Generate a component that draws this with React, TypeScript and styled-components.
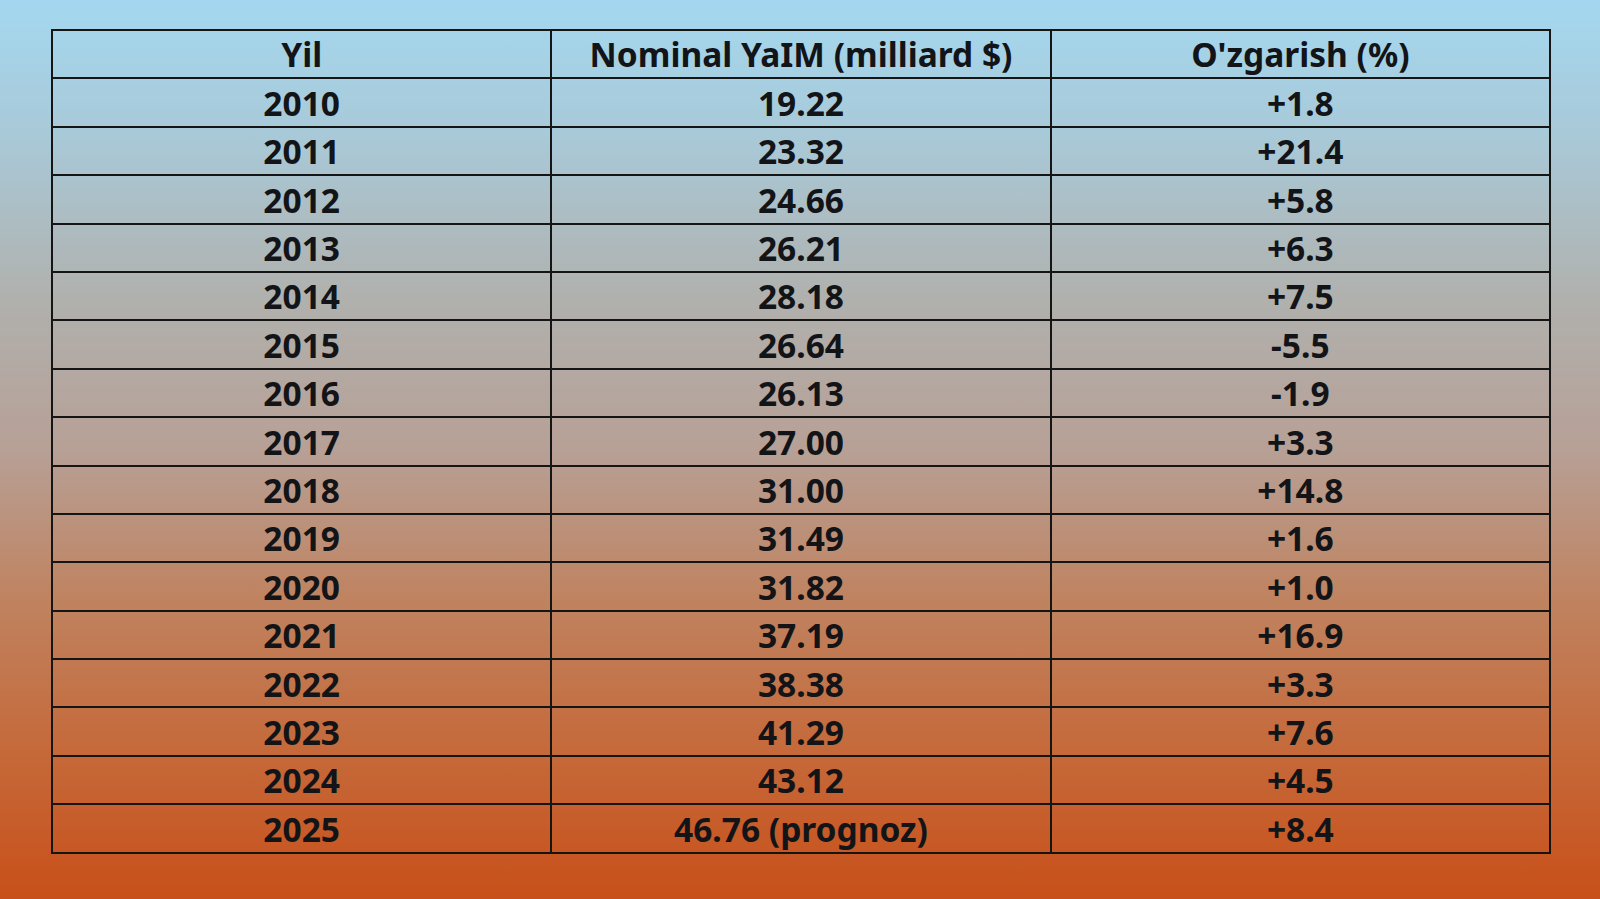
import React from "react";
import styled, { createGlobalStyle } from "styled-components";

const Global = createGlobalStyle`
  html, body { margin: 0; padding: 0; }
  body {
    width: 1600px;
    height: 899px;
    overflow: hidden;
    font-family: "Noto Sans", "Open Sans", sans-serif;
  }
`;

const Page = styled.div`
  width: 1600px;
  height: 899px;
  box-sizing: border-box;
  padding: 29px 0 0 51px;
  background: linear-gradient(
    to bottom,
    #a4d8f0 0%,
    #a9c8d6 16%,
    #b0b1ae 33%,
    #b7a096 50%,
    #bf8462 66%,
    #c56a3b 83%,
    #c8501a 100%
  );
`;

const Table = styled.table`
  width: 1500px;
  border-collapse: collapse;
  table-layout: fixed;
  border: 2px solid #151515;
`;

const Row = styled.tr`
  height: 48.4px;
`;

const Cell = styled.td`
  border: 2px solid #151515;
  text-align: center;
  vertical-align: middle;
  padding: 2px 0 0;
  font-size: 33.5px;
  font-weight: 700;
  line-height: 1;
  color: #121417;
`;

const rows: [string, string, string][] = [
  ["2010", "19.22", "+1.8"],
  ["2011", "23.32", "+21.4"],
  ["2012", "24.66", "+5.8"],
  ["2013", "26.21", "+6.3"],
  ["2014", "28.18", "+7.5"],
  ["2015", "26.64", "-5.5"],
  ["2016", "26.13", "-1.9"],
  ["2017", "27.00", "+3.3"],
  ["2018", "31.00", "+14.8"],
  ["2019", "31.49", "+1.6"],
  ["2020", "31.82", "+1.0"],
  ["2021", "37.19", "+16.9"],
  ["2022", "38.38", "+3.3"],
  ["2023", "41.29", "+7.6"],
  ["2024", "43.12", "+4.5"],
  ["2025", "46.76 (prognoz)", "+8.4"],
];

export default function App() {
  return (
    <>
      <Global />
      <Page>
        <Table>
          <thead>
            <Row>
              <Cell as="th">Yil</Cell>
              <Cell as="th">Nominal YaIM (milliard $)</Cell>
              <Cell as="th">O'zgarish (%)</Cell>
            </Row>
          </thead>
          <tbody>
            {rows.map((r) => (
              <Row key={r[0]}>
                <Cell>{r[0]}</Cell>
                <Cell>{r[1]}</Cell>
                <Cell>{r[2]}</Cell>
              </Row>
            ))}
          </tbody>
        </Table>
      </Page>
    </>
  );
}
